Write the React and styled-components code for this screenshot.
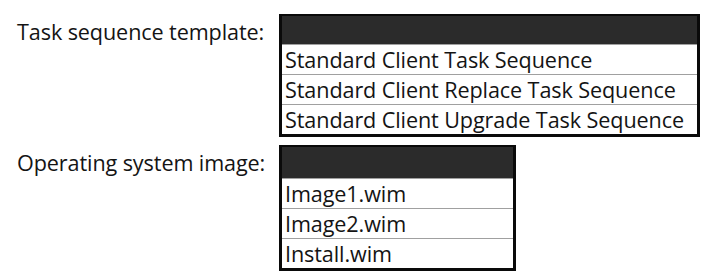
import styled, { createGlobalStyle } from 'styled-components';

const GlobalStyle = createGlobalStyle`
    body {
        margin: 0;
        background: #ffffff;
        font-family: "Open Sans", "Noto Sans", sans-serif;
        color: #141414;
    }
`;

const Page = styled.div`
    padding: 14px 0 0 17px;
    display: flex;
    flex-direction: column;
    gap: 8px;
`;

const Field = styled.div`
    display: grid;
    grid-template-columns: 262px auto;
    align-items: start;
`;

const Label = styled.div`
    font-size: 21.6px;
    line-height: 30px;
    padding-top: 3px;
    white-space: nowrap;
    letter-spacing: -0.1px;
`;

const ListBox = styled.div`
    width: ${(p) => p.$width}px;
    border: 3px solid #0a0a0a;
    border-top-width: 2px;
    box-sizing: border-box;
    display: flex;
    flex-direction: column;
`;

const Header = styled.div`
    height: ${(p) => p.$height}px;
    background: #2b2b2b;
`;

const Option = styled.div`
    height: 30px;
    box-sizing: border-box;
    border-top: 1px solid #a0a0a0;
    padding-left: 3px;
    font-size: 21.6px;
    line-height: 30px;
    white-space: nowrap;
    letter-spacing: -0.1px;
    overflow: hidden;

    &:first-of-type {
        border-top: none;
    }
`;

function Dropdown({ width, headerHeight, options }) {
    return (
        <ListBox $width={width}>
            <Header $height={headerHeight} />
            {options.map((option) => (
                <Option key={option}>{option}</Option>
            ))}
        </ListBox>
    );
}

function App() {
    const fields = [
        {
            label: "Task sequence template:",
            width: 421,
            headerHeight: 28,
            options: [
                "Standard Client Task Sequence",
                "Standard Client Replace Task Sequence",
                "Standard Client Upgrade Task Sequence",
            ],
        },
        {
            label: "Operating system image:",
            width: 237,
            headerHeight: 31,
            options: ["Image1.wim", "Image2.wim", "Install.wim"],
        },
    ];

    return (
        <>
            <GlobalStyle />
            <Page>
                {fields.map((field) => (
                    <Field key={field.label}>
                        <Label>{field.label}</Label>
                        <Dropdown
                            width={field.width}
                            headerHeight={field.headerHeight}
                            options={field.options}
                        />
                    </Field>
                ))}
            </Page>
        </>
    );
}

export default App;
